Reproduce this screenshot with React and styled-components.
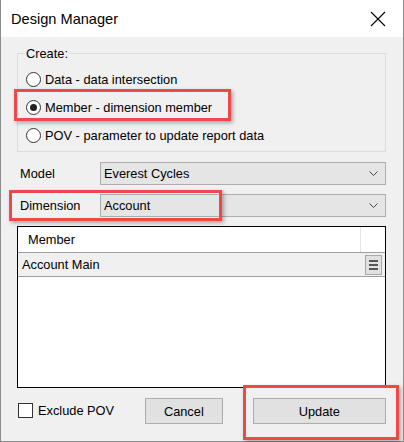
import React from "react";
import styled, { createGlobalStyle } from "styled-components";

const GlobalStyle = createGlobalStyle`
  html, body {
    margin: 0;
    padding: 0;
    background: #ffffff;
  }
  body {
    font-family: "Liberation Sans", Arial, sans-serif;
    color: #000;
  }
`;

const Window = styled.div`
  position: relative;
  width: 404px;
  height: 442px;
  box-sizing: border-box;
  border: 1px solid #8c8c8c;
  border-top: none;
  background: #f0f0f0;
  display: flex;
  flex-direction: column;
`;

const TitleBar = styled.div`
  height: 37px;
  flex: 0 0 37px;
  background: #fff;
  display: flex;
  align-items: center;
  justify-content: space-between;
  padding: 0 17px 0 10px;
`;

const Title = styled.div`
  font-size: 14.6px;
  color: #000;
`;

const Body = styled.div`
  flex: 1;
  padding: 9px 17px 17px 16px;
  display: flex;
  flex-direction: column;
  font-size: 12.8px;
`;

const Group = styled.fieldset`
  margin: 0;
  padding: 0 0 2px 8px;
  border: 1px solid #dcdcdc;
  height: 106px;
  box-sizing: border-box;
`;

const Legend = styled.legend`
  margin-left: -1px;
  padding: 0 1px;
  line-height: 15px;
`;

const RadioList = styled.div`
  margin-top: 4px;
  display: flex;
  flex-direction: column;
`;

const RadioRow = styled.label`
  height: 28px;
  display: flex;
  align-items: center;
  gap: 4px;
`;

const RadioDot = styled.span`
  width: 15px;
  height: 15px;
  box-sizing: border-box;
  border: 1px solid #333;
  border-radius: 50%;
  background: #fff;
  display: flex;
  align-items: center;
  justify-content: center;

  &::after {
    content: "";
    width: 7px;
    height: 7px;
    border-radius: 50%;
    background: ${(p) => (p.$checked ? "#222" : "transparent")};
  }
`;

const FieldRow = styled.div`
  display: grid;
  grid-template-columns: 83px 1fr;
  align-items: center;
  margin-top: ${(p) => p.$top}px;
`;

const FieldLabel = styled.span`
  padding-left: 3px;
`;

const Select = styled.div`
  height: 23px;
  box-sizing: border-box;
  border: 1px solid #adadad;
  background: #e5e5e5;
  display: flex;
  align-items: center;
  justify-content: space-between;
  padding: 0 5px 0 3px;
`;

const Grid = styled.div`
  margin-top: 9px;
  height: 162px;
  box-sizing: border-box;
  border: 1px solid #000;
  background: #fff;
  display: flex;
  flex-direction: column;
`;

const HeaderRow = styled.div`
  height: 26px;
  box-sizing: border-box;
  display: grid;
  grid-template-columns: 1fr 24px;
  border-bottom: 1px solid #a0a0a0;
`;

const HeaderCell = styled.div`
  display: flex;
  align-items: center;
  padding-left: 10px;
  border-right: ${(p) => (p.$sep ? "1px solid #e3e3e3" : "none")};
`;

const DataRow = styled.div`
  height: 24px;
  box-sizing: border-box;
  background: #f0f0f0;
  border-bottom: 1px solid #a0a0a0;
  display: flex;
  align-items: center;
  justify-content: space-between;
  padding: 0 3px 0 4px;
`;

const MenuButton = styled.div`
  width: 17px;
  height: 20px;
  box-sizing: border-box;
  border: 1px solid #a8a8a8;
  background: #e1e1e1;
  display: flex;
  flex-direction: column;
  align-items: center;
  justify-content: center;
  gap: 2px;

  span {
    width: 9px;
    height: 2px;
    background: #555;
  }
`;

const Footer = styled.div`
  margin-top: 10px;
  display: flex;
  align-items: center;
`;

const CheckLabel = styled.label`
  flex: 0 0 127px;
  display: flex;
  align-items: center;
  gap: 5px;
  padding-left: 1px;
  margin-top: -2px;
`;

const CheckBox = styled.span`
  width: 15px;
  height: 15px;
  box-sizing: border-box;
  border: 1px solid #333;
  background: #fff;
`;

const Button = styled.div`
  height: 26px;
  box-sizing: border-box;
  border: 1px solid #adadad;
  background: #e1e1e1;
  display: flex;
  align-items: center;
  justify-content: center;
  width: ${(p) => p.$w}px;
  margin-left: ${(p) => p.$ml || 0}px;
`;

const Highlight = styled.div`
  position: absolute;
  box-sizing: border-box;
  border: 3px solid #f04747;
  box-shadow: 2px 2px 4px rgba(0, 0, 0, 0.3);
  pointer-events: none;
`;

const Chevron = () => (
  <svg width="9" height="5" viewBox="0 0 9 5" style={{ marginRight: 2 }}>
    <path d="M0.5 0.5 L4.5 4.5 L8.5 0.5" fill="none" stroke="#444" strokeWidth="1" />
  </svg>
);

const CloseIcon = () => (
  <svg width="16" height="16" viewBox="0 0 16 16">
    <path d="M1 1 L15 15 M15 1 L1 15" stroke="#000" strokeWidth="1.1" />
  </svg>
);

const options = [
  { label: "Data - data intersection", checked: false },
  { label: "Member - dimension member", checked: true },
  { label: "POV - parameter to update report data", checked: false },
];

export default function App() {
  return (
    <>
      <GlobalStyle />
      <Window>
        <TitleBar>
          <Title>Design Manager</Title>
          <CloseIcon />
        </TitleBar>
        <Body>
          <Group>
            <Legend>Create:</Legend>
            <RadioList>
              {options.map((o) => (
                <RadioRow key={o.label}>
                  <RadioDot $checked={o.checked} />
                  {o.label}
                </RadioRow>
              ))}
            </RadioList>
          </Group>
          <FieldRow $top={10}>
            <FieldLabel>Model</FieldLabel>
            <Select>
              Everest Cycles
              <Chevron />
            </Select>
          </FieldRow>
          <FieldRow $top={9}>
            <FieldLabel>Dimension</FieldLabel>
            <Select>
              Account
              <Chevron />
            </Select>
          </FieldRow>
          <Grid>
            <HeaderRow>
              <HeaderCell $sep>Member</HeaderCell>
              <HeaderCell />
            </HeaderRow>
            <DataRow>
              Account Main
              <MenuButton>
                <span />
                <span />
                <span />
              </MenuButton>
            </DataRow>
          </Grid>
          <Footer>
            <CheckLabel>
              <CheckBox />
              Exclude POV
            </CheckLabel>
            <Button $w={78}>Cancel</Button>
            <Button $w={134} $ml={30}>Update</Button>
          </Footer>
        </Body>
        <Highlight style={{ left: 13, top: 89, width: 217, height: 32 }} />
        <Highlight style={{ left: 8, top: 190, width: 213, height: 31 }} />
        <Highlight style={{ left: 242, top: 385, width: 156, height: 55 }} />
      </Window>
    </>
  );
}
